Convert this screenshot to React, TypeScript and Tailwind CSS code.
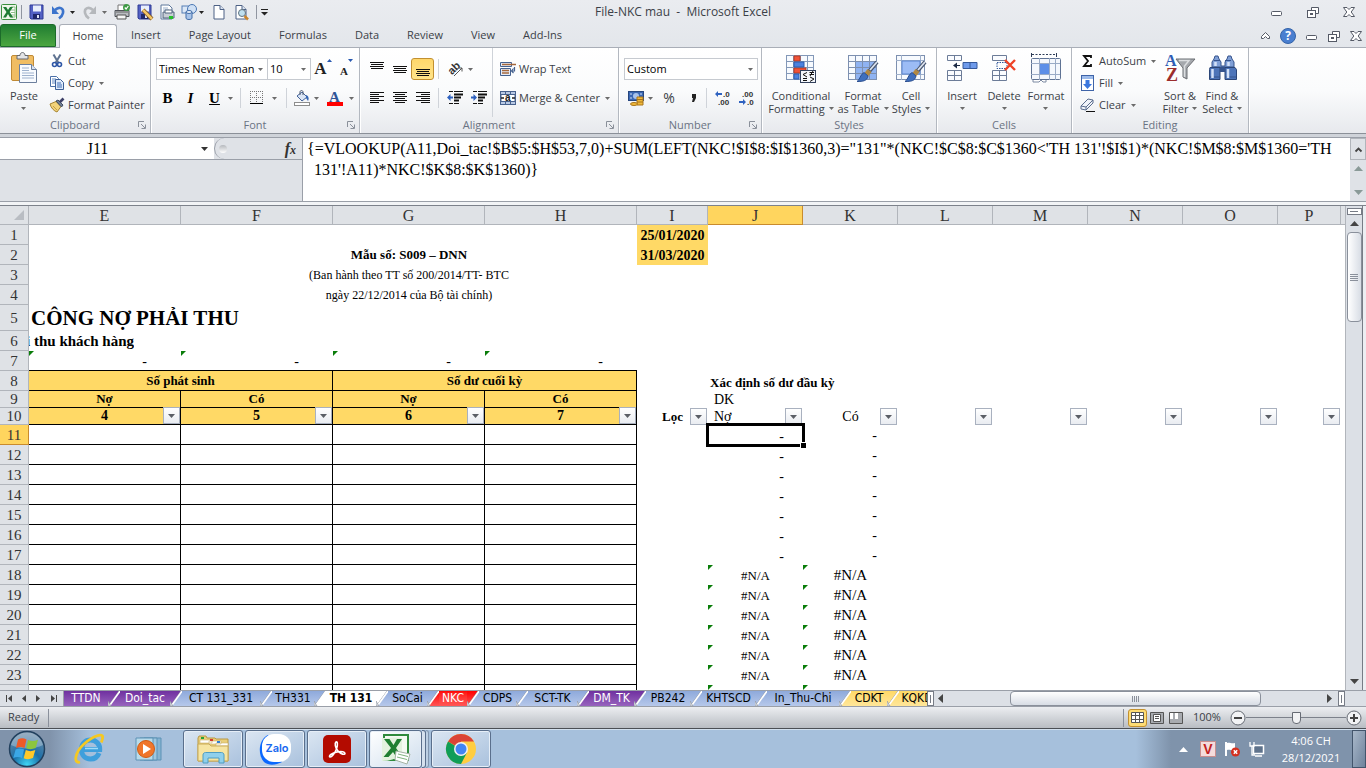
import { ReactNode } from 'react';

type IconProps = { w?: number; h?: number; children: ReactNode };

function Icon({ w = 16, h = 16, children }: IconProps) {
    return (
        <svg width={w} height={h} viewBox={`0 0 ${w} ${h}`} className="shrink-0 overflow-visible" fill="none" aria-hidden="true">
            {children}
        </svg>
    );
}

function Caret({ dark = false }: { dark?: boolean }) {
    return (
        <svg width="5" height="3" viewBox="0 0 5 3" className="shrink-0" aria-hidden="true">
            <path d="M0 0h5L2.500 3z" fill={dark ? '#222' : '#6b6b6b'} />
        </svg>
    );
}

/* ---------- icons ---------- */

const ExcelIcon = () => (
    <Icon w={16} h={16}>
        <rect x="0.5" y="0.5" width="15" height="15" rx="1" fill="#eef6ea" stroke="#3b8f3f" />
        <path d="M10 3h4v10h-4" stroke="#8fbf8a" fill="#fff" />
        <path d="M10 6h4M10 8.500h4M10 11h4" stroke="#8fbf8a" />
        <path d="M2 3h3.200l1.800 3 2-3h3L8.600 8l3.600 5.500H9L7 10l-2 3.500H2L5.500 8z" fill="#1e7b34" />
    </Icon>
);

const SaveIcon = ({ pencil = false }: { pencil?: boolean }) => (
    <Icon>
        <path d="M1 1h13v14H2l-1-1z" fill="#5361c4" stroke="#2f3a94" />
        <rect x="4" y="1.500" width="8" height="6" fill="#e8eefb" />
        <rect x="4" y="10" width="7" height="5" fill="#20286b" />
        <rect x="8" y="11" width="2" height="3" fill="#dfe5f7" />
        {pencil && <path d="M6 6l9 9" stroke="#7a4e1d" strokeWidth="4" />}
        {pencil && <path d="M6 6l9 9" stroke="#f3c667" strokeWidth="2.500" />}
    </Icon>
);

const UndoIcon = ({ redo = false }: { redo?: boolean }) => (
    <Icon>
        <g transform={redo ? 'translate(16 0) scale(-1 1)' : undefined}>
            <path d="M4 6c4-4 9-2 8 3-.5 2.500-2 4-4 5.500" stroke={redo ? '#b5b8bc' : '#3c74cc'} strokeWidth="2.600" />
            <path d="M1 2v8h7z" fill={redo ? '#b5b8bc' : '#3c74cc'} />
        </g>
    </Icon>
);

const PrintIcon = () => (
    <Icon>
        <path d="M4 1h8v6H4z" fill="#fff" stroke="#777" />
        <path d="M1 6.500h14v6H1z" fill="#b9bcc1" stroke="#4e5258" />
        <path d="M3 11h9v4H3z" fill="#f5f5f5" stroke="#555" />
        <path d="M2 8h12" stroke="#666" />
        <circle cx="12.500" cy="3.500" r="3.500" fill="#3f9a46" />
        <path d="M10.800 3.500l1.300 1.500 2.200-3" stroke="#fff" strokeWidth="1.200" />
    </Icon>
);

const QuickPrintIcon = () => (
    <Icon>
        <path d="M2 1h8l3 3v11H2z" fill="#fff" stroke="#5f789c" />
        <path d="M4 4h5M4 6h6" stroke="#9ab0cc" />
        <path d="M4 8h11v6H4z" fill="#c8ced6" stroke="#51657f" />
        <path d="M6 6h7v3H6z" fill="#fff" stroke="#51657f" />
        <rect x="10" y="12" width="4" height="3" fill="#27c02c" />
    </Icon>
);

const ShapesIcon = () => (
    <Icon>
        <rect x="1" y="2" width="8" height="7" fill="#dce8f7" stroke="#567fb5" />
        <circle cx="11" cy="5" r="4.500" fill="#cfe0f5" stroke="#4a77b4" />
        <path d="M5 8v6c0 2 6 2 6 0V8z" fill="#a8c4ea" stroke="#416ca8" />
        <ellipse cx="8" cy="8" rx="3" ry="1.500" fill="#e6effa" stroke="#416ca8" />
    </Icon>
);

const PageIcon = ({ lens = false }: { lens?: boolean }) => (
    <Icon w={14}>
        <path d="M2 1.500h6l4 4v9.500H2z" fill="#fff" stroke="#4d6185" />
        <path d="M8 1.500v4h4" stroke="#4d6185" fill="#dbe4f2" />
        {lens && <circle cx="8" cy="9" r="3.500" fill="#bfe0ef" stroke="#61717f" />}
        {lens && <path d="M10.500 12l3.500 3.500" stroke="#c9842b" strokeWidth="2.500" />}
    </Icon>
);

const PasteIcon = () => (
    <Icon w={28} h={32}>
        <rect x="1.500" y="3.500" width="22" height="25" rx="1.500" fill="#f0bd63" stroke="#c08a35" />
        <path d="M7 3.500h3c0-4 5-4 5 0h3V7H7z" fill="#e3e4e6" stroke="#67696e" />
        <path d="M9.500 12.500h12l5 5v13h-17z" fill="#f8fbff" stroke="#6c7f9d" />
        <path d="M21.500 12.500v5h5" fill="#d7e2f2" stroke="#6c7f9d" />
        <path d="M12 16h7M12 18.500h7M12 21h12M12 23.500h12M12 26h12" stroke="#9fb2ce" />
    </Icon>
);

const CutIcon = () => (
    <Icon>
        <path d="M4.500 1.500L9.500 10M11.500 1.500L6.500 10" stroke="#5f7391" strokeWidth="2" />
        <circle cx="5.500" cy="11.500" r="2" stroke="#2d56a6" strokeWidth="1.600" />
        <circle cx="10.500" cy="11.500" r="2" stroke="#2d56a6" strokeWidth="1.600" />
    </Icon>
);

const CopyIcon = () => (
    <Icon>
        <path d="M1.500 1.500h6l2 2v8h-8z" fill="#fff" stroke="#4a6fa8" />
        <path d="M3 4h4M3 6h4M3 8h3" stroke="#5f86c2" />
        <path d="M6.500 4.500h5l3 3v7h-8z" fill="#dfeafa" stroke="#3b5f98" />
        <path d="M8 8h4M8 10h5M8 12h5" stroke="#3f6cb4" />
    </Icon>
);

const PainterIcon = () => (
    <Icon>
        <path d="M1 7l6-2.500 5 5L8 15C5 14 2 11 1 7z" fill="#f2d37a" stroke="#a68432" />
        <path d="M4 9l4 4" stroke="#c6a146" />
        <path d="M7 4l2-1 5 5-1.500 2z" fill="#6f7f96" stroke="#414d60" />
        <path d="M11 5l3.500-3.500" stroke="#3c3f66" strokeWidth="2.600" />
    </Icon>
);

const GrowFontIcon = ({ shrink = false }: { shrink?: boolean }) => (
    <span className="flex items-start font-['Liberation_Serif',serif] font-bold text-[#222]">
        <span className={shrink ? 'pt-1 text-[11px] leading-4' : 'text-[17px] leading-5'}>A</span>
        <svg width="5" height="3" viewBox="0 0 5 3" aria-hidden="true">
            <path d={shrink ? 'M0 0h5L2.500 3z' : 'M0 3h5L2.500 0z'} fill="#2858b0" />
        </svg>
    </span>
);

const BordersIcon = () => (
    <Icon w={14} h={14}>
        <path d="M.5 0v12M6.500 0v12M12.500 0v12M0 .5h13M0 6.500h13" stroke="#777" strokeDasharray="1 1" />
        <path d="M0 12.500h13" stroke="#000" />
    </Icon>
);

const FillColorIcon = () => (
    <Icon>
        <path d="M3 6l5-4 5 5-5 4z" fill="#dbe6f6" stroke="#44639a" />
        <path d="M6 5V2c0-2 3-2 3 0v3" stroke="#4d5a70" />
        <path d="M12 5c3 1 3 4 2 6l-2-3z" fill="#3465b4" />
        <rect x=".5" y="12.500" width="15" height="3" fill="#fff" stroke="#8d8d8d" />
    </Icon>
);

const AlignIcon = ({ rows }: { rows: number[][] }) => (
    <Icon w={14} h={14}>
        {rows.map(([x, y, w]) => (
            <rect key={y} x={x} y={y} width={w} height="1" fill="#111" />
        ))}
    </Icon>
);

const TOP = [[0, 0, 14], [1, 2, 12], [0, 4, 14], [1, 6, 12]];
const MIDDLE = [[0, 4, 14], [1, 6, 12], [0, 8, 14], [1, 10, 12]];
const BOTTOM = [[0, 7, 14], [1, 9, 12], [0, 11, 14], [1, 13, 12]];
const LEFT = [[0, 1, 14], [0, 3, 9], [0, 5, 14], [0, 7, 9], [0, 9, 14], [0, 11, 9]];
const CENTER = [[0, 1, 14], [2, 3, 10], [0, 5, 14], [2, 7, 10], [0, 9, 14], [2, 11, 10]];
const RIGHT = [[0, 1, 14], [5, 3, 9], [0, 5, 14], [5, 7, 9], [0, 9, 14], [5, 11, 9]];

const IndentIcon = ({ out = false }: { out?: boolean }) => (
    <Icon>
        <path d="M2 1.500h4M7 1.500h9M2 13.500h4M7 13.500h5" stroke="#111" />
        <path d="M7 4.500h9M7 10.500h5" stroke="#111" strokeWidth="2" />
        <path d="M7 7.500h7" stroke="#111" strokeWidth="2" />
        <path d={out ? 'M0 7.500L3.500 4v2.500H6v2H3.500V11z' : 'M6 7.500L2.500 4v2.500H0v2h2.500V11z'} fill="#2f62c0" />
    </Icon>
);

const OrientIcon = () => (
    <Icon>
        <text x="0" y="11" transform="rotate(-45 6 8)" fontSize="11" fontWeight="bold" fontFamily="Liberation Sans, sans-serif" fill="#333">ab</text>
        <path d="M6 15l8-8M10.500 7H14v3.500" stroke="#555" />
    </Icon>
);

const WrapIcon = () => (
    <Icon>
        <path d="M.5 1.500h11v4H.5zM.5 7.500h10v7H.5z" fill="#e4ecf8" stroke="#44618f" />
        <path d="M2 3.500h14M2 9.500h7M2 12h7" stroke="#a6683c" strokeWidth="1.300" />
        <path d="M14.500 6v4H12M13.500 7.500L11.500 10l2 2" stroke="#44618f" strokeWidth="1.200" />
    </Icon>
);

const MergeIcon = () => (
    <Icon>
        <rect x=".5" y="1.500" width="15" height="13" fill="#b8c9e4" stroke="#48628d" />
        <path d="M5.500 2v3M10.500 2v3M5.500 11v3M10.500 11v3" stroke="#48628d" />
        <rect x="1" y="4.500" width="14" height="7" fill="#fff" stroke="#48628d" />
        <text x="5" y="11" fontSize="10" fontWeight="bold" fontFamily="Liberation Sans, sans-serif" fill="#222">a</text>
        <path d="M1 8h3M12 8h3" stroke="#222" strokeWidth="1.500" />
    </Icon>
);

const CurrencyIcon = () => (
    <Icon>
        <rect x=".5" y="1.500" width="15" height="9" fill="#3b68b4" stroke="#27477f" />
        <ellipse cx="8" cy="6" rx="3" ry="3" fill="#a8c2ea" />
        <path d="M2 4h2M12 4h2M2 8h2" stroke="#cfdef5" />
        <path d="M9 7h6v8H9z" fill="#f0b93a" stroke="#a9741a" />
        <path d="M9 9.500h6M9 12h6" stroke="#a9741a" />
        <ellipse cx="6" cy="14" rx="3.500" ry="1.500" fill="#f0b93a" stroke="#a9741a" />
    </Icon>
);

const DecimalIcon = ({ less = false }: { less?: boolean }) => (
    <Icon>
        <text x={less ? 3 : 8} y="7" fontSize="8" fontWeight="bold" fontFamily="Liberation Sans, sans-serif" fill="#333">{less ? '.00' : '.0'}</text>
        <text x={less ? 8 : 3} y="15" fontSize="8" fontWeight="bold" fontFamily="Liberation Sans, sans-serif" fill="#333">{less ? '.0' : '.00'}</text>
        {less ? (
            <path d="M7 12L4 9v2H0v2h4v2z" fill="#2f62c0" />
        ) : (
            <path d="M0 4l3-3v2h4v2H3v2z" fill="#2f62c0" />
        )}
    </Icon>
);

const Brush = () => (
    <g>
        <path d="M30 10L22 19.500" stroke="#46546e" strokeWidth="4" />
        <path d="M30 10L23 18" stroke="#dce3ee" strokeWidth="1.800" />
        <path d="M22.500 18.500l-3 4" stroke="#b08843" strokeWidth="5" />
        <path d="M17 20.500l4 3.500c-1 5-5 5.500-11 5.500 3-1.500 3-7 7-9z" fill="#3f6fbd" stroke="#2b4f90" />
    </g>
);

const ConditionalIcon = () => (
    <Icon w={32} h={32}>
        <rect x="1.500" y="3.500" width="27" height="24" fill="#f7fafe" stroke="#8398b8" />
        <path d="M8.500 3v25M15.500 3v25M22.500 3v25M1 9.500h28M1 15.500h28M1 21.500h28" stroke="#8398b8" />
        <path d="M9 4h6v5H9zM9 16h12v5H9z" fill="#f05237" stroke="#b83a25" />
        <path d="M9 10h10v5H9zM9 22h5v5H9z" fill="#4c82e0" stroke="#2d5cae" />
        <rect x="15.500" y="18.500" width="15" height="12" fill="#f4f7fc" stroke="#33415c" />
        <path d="M22 20.500l-4 2 4 2.500M18 26.500h4M18 28.500h4M24.500 20.500h4.500M24.500 22.500h4.500M28 19l-3 5M25 25l4 2-4 2.500" stroke="#111" />
    </Icon>
);

const FormatTableIcon = () => (
    <Icon w={32} h={32}>
        <rect x="1.500" y="3.500" width="28" height="24" fill="#f7fafe" stroke="#7d90b0" />
        <rect x="9" y="10" width="20" height="17" fill="#8fb3f2" />
        <path d="M8.500 3v25M15.500 3v25M22.500 3v25M1 9.500h28M1 15.500h28M1 21.500h28" stroke="#7d90b0" />
        <Brush />
    </Icon>
);

const CellStylesIcon = () => (
    <Icon w={32} h={32}>
        <rect x="1.500" y="3.500" width="28" height="24" fill="#f7fafe" stroke="#7d90b0" />
        <path d="M6.500 3v25M25.500 3v25M1 8.500h28M1 22.500h28" stroke="#9fb0ca" />
        <rect x="7" y="9" width="18" height="13" fill="#9cbcf5" stroke="#5c86cf" />
        <Brush />
    </Icon>
);

const InsertIcon = () => (
    <Icon w={32} h={32}>
        <path d="M1.500 3.500h14v5h-14zM8.500 3v6M1.500 18.500h14v10h-14zM8.500 18v10M1 23.500h15" fill="#fafcff" stroke="#6c7c98" />
        <path d="M17 10.500h14v6H17z" fill="#6e9aea" stroke="#34589a" />
        <path d="M24 10v7" stroke="#34589a" />
        <path d="M7 13.500l4-3v2.500h3v1h-3v2.500z" fill="#1d2b45" />
    </Icon>
);

const DeleteIcon = () => (
    <Icon w={32} h={32}>
        <path d="M4.500 3.500h14v5h-14zM4.500 18.500h14v10h-14zM11.500 18v10M4 23.500h15" fill="#fafcff" stroke="#6c7c98" />
        <path d="M9 10.500h10v6H9z" stroke="#33589a" strokeDasharray="1.500 1" />
        <path d="M17 8l10 10M27 8L17 18" stroke="#ee4327" strokeWidth="2.400" />
    </Icon>
);

const FormatIcon = () => (
    <Icon w={32} h={32}>
        <path d="M1.500 1v4M26.500 1v4" stroke="#2d3c56" />
        <path d="M2 2.500h24" stroke="#2d3c56" strokeDasharray="2 1.500" />
        <path d="M3 27v3h6l2-2 2 2h3v-3" fill="#fff" stroke="#7d8aa2" />
        <rect x="1.500" y="6.500" width="29" height="21" rx="1" fill="#f5f8fd" stroke="#5f7394" />
        <path d="M9.500 6v22M19.500 6v22M25.500 6v22M1 11.500h29M1 22.500h29" stroke="#9aabc6" />
        <rect x="10" y="12" width="9" height="10" fill="#5d8fe8" />
    </Icon>
);

const FillIcon = () => (
    <Icon>
        <rect x="1.500" y=".5" width="12" height="15" fill="#fff" stroke="#3f64a8" />
        <rect x="2" y="1" width="11" height="3" fill="#9dbbea" />
        <path d="M5.500 5h4v4H12l-4.500 5L3 9h2.500z" fill="#3a76de" />
    </Icon>
);

const ClearIcon = () => (
    <Icon>
        <path d="M1 9l7-7 5 1v3l-7 7-5-1z" fill="#f0f3f9" stroke="#5a6d8e" />
        <path d="M1 9l5 1 7-7M6 10v3" stroke="#5a6d8e" />
        <path d="M6 14.500h9" stroke="#111" />
    </Icon>
);

const SortIcon = () => (
    <Icon w={32} h={32}>
        <path d="M12 7h19l-8 9v11l-4-2v-9z" fill="#a5a8ad" stroke="#6b6e73" />
        <path d="M15 8.500h10L20.500 14v11" stroke="#dcdee1" strokeWidth="1.500" />
        <text x="1" y="14" fontSize="16" fontWeight="bold" fontFamily="Liberation Serif, serif" fill="#2f5db5">A</text>
        <text x="2" y="29" fontSize="18" fontWeight="bold" fontFamily="Liberation Serif, serif" fill="#9b2d2d">Z</text>
    </Icon>
);

const FindIcon = () => (
    <Icon w={32} h={32}>
        <path d="M8 7l1-3h3l1 3 2 3v4h4v-4l2-3 1-3h3l1 3 2 3v5H6v-5z" fill="#7f9fd6" stroke="#36548d" />
        <path d="M4 15.500h10v12H3.500v-10zM19 15.500h10l1.500 2v10H19z" fill="#4d74b8" stroke="#2b4577" />
        <path d="M14 15h5v5h-5z" fill="#36548d" />
        <path d="M8 8.500h6M19 8.500h6M4 25h10M19 25h11" stroke="#36548d" />
        <path d="M6.500 17v9M22 17v9M9.500 10v4M22.500 10v4" stroke="#d3e1f8" strokeWidth="2.500" />
    </Icon>
);

const MinIcon = () => (
    <Icon w={12} h={12}><rect x=".5" y="5.500" width="10" height="4" rx="1" fill="#fff" stroke="#555a66" /></Icon>
);
const RestoreIcon = () => (
    <Icon w={12} h={12}>
        <path d="M4.500 1.500h7v6h-3v-3h-4z" fill="#fff" stroke="#555a66" />
        <rect x=".5" y="4.500" width="8" height="7" fill="#fff" stroke="#555a66" />
        <rect x="3.500" y="7.500" width="2" height="1" stroke="#555a66" />
    </Icon>
);
const CloseIcon = () => (
    <Icon w={12} h={12}>
        <path d="M.5 1.500h3.500l2 2 2-2h3.500L8.200 6l3.300 4.500H8l-2-2-2 2H.5L3.800 6z" fill="#fff" stroke="#555a66" />
    </Icon>
);

/* ---------- ribbon parts ---------- */

function Group({ label, launcher = false, className = '', children }: { label: string; launcher?: boolean; className?: string; children: ReactNode }) {
    return (
        <section className={`flex shrink-0 flex-col border-r border-[#b3b8c0] shadow-[1px_0_0_#fff] ${className}`} aria-label={label}>
            <div className="flex h-[69px] pl-1">{children}</div>
            <div className="relative h-4 text-center leading-4 text-[#6a7383]">
                {label}
                {launcher && (
                    <button type="button" className="absolute right-1 top-1" aria-label={`${label} settings`}>
                        <Icon w={8} h={8}>
                            <path d="M.5 6V.5H6M3 3l4 4M7.500 3.500v4h-4" stroke="#8a909a" />
                        </Icon>
                    </button>
                )}
            </div>
        </section>
    );
}

function LargeButton({ icon, lines, caretBelow = false, className = '' }: { icon: ReactNode; lines: string[]; caretBelow?: boolean; className?: string }) {
    return (
        <button type="button" className={`flex flex-col items-center gap-[5px] whitespace-nowrap pt-1 leading-[13px] ${className}`}>
            {icon}
            <span className="flex flex-col items-center">
                <span>{lines[0]}</span>
                <span className="flex h-[13px] items-center gap-1">
                    {!caretBelow && lines[1]}
                    <Caret />
                </span>
            </span>
        </button>
    );
}

function SmallButton({ icon, label, caret = false }: { icon: ReactNode; label: string; caret?: boolean }) {
    return (
        <button type="button" className="flex h-[22px] items-center gap-[3px] whitespace-nowrap">
            {icon}
            <span>{label}</span>
            {caret && <span className="pl-0.5"><Caret /></span>}
        </button>
    );
}

function Combo({ label, value, className }: { label: string; value: string; className: string }) {
    return (
        <label className={`flex h-[22px] items-center border border-[#c6cad0] bg-white pr-1 ${className}`}>
            <select aria-label={label} defaultValue={value} className="min-w-0 flex-1 appearance-none bg-transparent pl-[2px] text-black outline-none">
                <option>{value}</option>
            </select>
            <Caret />
        </label>
    );
}

const Tool = ({ label, children, className = 'w-[23px]' }: { label: string; children: ReactNode; className?: string }) => (
    <button type="button" aria-label={label} className={`flex h-[22px] items-center justify-center ${className}`}>
        {children}
    </button>
);

const Sep = () => <span className="h-5 w-px shrink-0 bg-[#cfd3d9]" />;

/* ---------- sheet data ---------- */

const columns = [
    { id: 'E', width: 'w-[152px]' },
    { id: 'F', width: 'w-[152px]' },
    { id: 'G', width: 'w-[152px]' },
    { id: 'H', width: 'w-[152px]' },
    { id: 'I', width: 'w-[71px]' },
    { id: 'J', width: 'w-[95px]' },
    { id: 'K', width: 'w-[95px]' },
    { id: 'L', width: 'w-[95px]' },
    { id: 'M', width: 'w-[95px]' },
    { id: 'N', width: 'w-[95px]' },
    { id: 'O', width: 'w-[95px]' },
    { id: 'P', width: 'w-[63px]' },
];

const bodyRows = [11, 12, 13, 14, 15, 16, 17, 18, 19, 20, 21, 22, 23, 24];

const sheetTabs = [
    { name: 'TTDN', width: 'w-11', tone: 'purple' },
    { name: 'Doi_tac', width: 'w-[50px]', tone: 'purple' },
    { name: 'CT 131_331', width: 'w-[78px]', tone: 'blue' },
    { name: 'TH331', width: 'w-[42px]', tone: 'blue' },
    { name: 'TH 131', width: 'w-[50px]', tone: 'active' },
    { name: 'SoCai', width: 'w-[39px]', tone: 'blue' },
    { name: 'NKC', width: 'w-7', tone: 'red' },
    { name: 'CDPS', width: 'w-[37px]', tone: 'blue' },
    { name: 'SCT-TK', width: 'w-[49px]', tone: 'blue' },
    { name: 'DM_TK', width: 'w-[45px]', tone: 'purple' },
    { name: 'PB242', width: 'w-11', tone: 'blue' },
    { name: 'KHTSCD', width: 'w-[53px]', tone: 'blue' },
    { name: 'In_Thu-Chi', width: 'w-[72px]', tone: 'blue' },
    { name: 'CDKT', width: 'w-9', tone: 'gold' },
    { name: 'KQKD', width: 'w-9', tone: 'gold' },
];

const toneClass: Record<string, string> = {
    purple: 'bg-gradient-to-b from-[#7030a0] to-[#9763bd] text-white',
    blue: 'bg-gradient-to-b from-[#8ea9db] to-[#b6c8ea] text-black',
    red: 'bg-gradient-to-b from-[#ff0000] to-[#ff5555] text-white',
    gold: 'bg-gradient-to-b from-[#ffd966] to-[#ffe699] text-black',
    active: 'bg-white text-black font-bold',
};

const toneFill: Record<string, string[]> = {
    purple: ['#7030a0', '#9763bd'],
    blue: ['#8ea9db', '#b6c8ea'],
    red: ['#ff0000', '#ff5555'],
    gold: ['#ffd966', '#ffe699'],
    active: ['#ffffff', '#ffffff'],
};

const formula =
    "{=VLOOKUP(A11,Doi_tac!$B$5:$H$53,7,0)+SUM(LEFT(NKC!$I$8:$I$1360,3)=\"131\"*(NKC!$C$8:$C$1360<'TH 131'!$I$1)*(NKC!$M$8:$M$1360='TH 131'!A11)*NKC!$K$8:$K$1360)}";

// cells inside the bordered table keep their right border clear, the others stop a pixel short of the gridline
const Filter = ({ inset = false }: { inset?: boolean }) => (
    <button type="button" aria-label="Filter" className={`absolute bottom-0 flex size-[17px] items-center justify-center border border-[#a9b1bf] bg-gradient-to-b from-white to-[#e9ecf1] ${inset ? 'right-px' : 'right-0'}`}>
        <svg width="7" height="4" viewBox="0 0 7 4" aria-hidden="true"><path d="M0 0h7L3.500 4z" fill="#5b5f66" /></svg>
    </button>
);

const ErrorMark = () => (
    <svg width="5" height="5" viewBox="0 0 5 5" className="absolute left-0 top-0" aria-hidden="true"><path d="M0 0h5L0 5z" fill="#0a7d0a" /></svg>
);

function RowHead({ n, active = false }: { n: number; active?: boolean }) {
    return (
        <th scope="row" className={`border-b border-r text-center text-[15px] font-normal leading-4 ${active ? 'border-[#c98b2d] bg-[#ffd55e] text-[#333]' : 'border-[#b1b5bb] bg-[#dfe2e6] text-[#333]'}`}>
            {n}
        </th>
    );
}

const Blank = ({ count }: { count: number }) => <td colSpan={count} />;

function Sheet() {
    return (
        <table className="w-full table-fixed border-separate border-spacing-0 font-['Liberation_Serif',serif] text-[13px] leading-4 text-black [&_td]:p-0 [&_th]:p-0">
            <colgroup>
                <col className="w-[29px]" />
                {columns.map((c) => <col key={c.id} className={c.width} />)}
                <col />
            </colgroup>
            <thead>
                <tr className="h-[19px] bg-[#dfe2e6] text-base leading-4 text-[#333]">
                    <td className="border-b border-r border-[#b1b5bb]">
                        <svg width="10" height="10" viewBox="0 0 10 10" className="ml-auto mr-1" aria-hidden="true"><path d="M10 0v10H0z" fill="#b9bdc3" /></svg>
                    </td>
                    {columns.map((c) => (
                        <th key={c.id} scope="col" className={`border-b border-r pt-px! font-normal ${c.id === 'J' ? 'border-[#c98b2d] bg-[#ffd55e]' : 'border-[#b1b5bb]'}`}>
                            {c.id}
                        </th>
                    ))}
                    <td className="border-b border-[#b1b5bb]" />
                </tr>
            </thead>
            <tbody>
                <tr className="h-5">
                    <RowHead n={1} />
                    <Blank count={4} />
                    <td className="bg-[#ffd966] pt-0.5! text-center text-sm font-bold leading-4">25/01/2020</td>
                    <Blank count={8} />
                </tr>
                <tr className="h-5">
                    <RowHead n={2} />
                    <Blank count={2} />
                    <td className="text-center text-[13px] font-bold">Mẫu số: S009 – DNN</td>
                    <td />
                    <td className="bg-[#ffd966] pt-0.5! text-center text-sm font-bold leading-4">31/03/2020</td>
                    <Blank count={8} />
                </tr>
                <tr className="h-5">
                    <RowHead n={3} />
                    <Blank count={2} />
                    <td><div className="flex justify-center whitespace-nowrap text-xs leading-4">(Ban hành theo TT số 200/2014/TT- BTC</div></td>
                    <Blank count={10} />
                </tr>
                <tr className="h-5">
                    <RowHead n={4} />
                    <Blank count={2} />
                    <td><div className="flex justify-center whitespace-nowrap text-xs leading-4">ngày 22/12/2014 của Bộ tài chính)</div></td>
                    <Blank count={10} />
                </tr>
                <tr className="h-[26px]">
                    <RowHead n={5} />
                    <td colSpan={2} className="pl-[2px]! text-[21px] font-bold leading-6">CÔNG NỢ PHẢI THU</td>
                    <Blank count={11} />
                </tr>
                <tr className="h-5">
                    <RowHead n={6} />
                    <td colSpan={2}><div className="flex w-[105px] justify-end overflow-hidden whitespace-nowrap text-[15px] font-bold leading-[19px]">i thu khách hàng</div></td>
                    <Blank count={11} />
                </tr>
                <tr className="h-5">
                    <RowHead n={7} />
                    {['E', 'F', 'G', 'H'].map((c) => (
                        <td key={c} className="relative border-b border-black pr-[34px]! pt-0.5! text-right text-sm leading-4"><ErrorMark />-</td>
                    ))}
                    <Blank count={9} />
                </tr>
                <tr className="h-5">
                    <RowHead n={8} />
                    <td colSpan={2} className="border-b border-r border-black bg-[#ffd966] text-center font-bold">Số phát sinh</td>
                    <td colSpan={2} className="border-b border-r border-black bg-[#ffd966] text-center font-bold">Số dư cuối kỳ</td>
                    <td />
                    <td colSpan={2} className="pl-[2px]! align-bottom font-bold">Xác định số dư đầu kỳ</td>
                    <Blank count={6} />
                </tr>
                <tr className="h-[17px]">
                    <RowHead n={9} />
                    {['Nợ', 'Có', 'Nợ', 'Có'].map((t, i) => (
                        <td key={i} className="border-b border-r border-black bg-[#ffd966] text-center font-bold">{t}</td>
                    ))}
                    <td />
                    <td className="pl-1.5! text-sm leading-4">DK</td>
                    <Blank count={7} />
                </tr>
                <tr className="h-[17px]">
                    <RowHead n={10} />
                    {['4', '5', '6', '7'].map((t) => (
                        <td key={t} className="relative border-b border-r border-black bg-[#ffd966] text-center text-sm font-bold leading-4">{t}<Filter /></td>
                    ))}
                    <td className="relative text-center font-bold">Lọc<Filter inset /></td>
                    <td className="relative pl-1.5! text-sm leading-4">Nợ<Filter inset /></td>
                    <td className="relative text-center text-sm leading-4">Có<Filter inset /></td>
                    {['L', 'M', 'N', 'O', 'P'].map((c) => <td key={c} className="relative"><Filter inset /></td>)}
                    <td />
                </tr>
                {bodyRows.map((n) => {
                    const missing = n >= 18;
                    return (
                        <tr key={n} className="h-5">
                            <RowHead n={n} active={n === 11} />
                            {['E', 'F', 'G', 'H'].map((c) => <td key={c} className="border-b border-r border-black" />)}
                            <td />
                            <td className={missing ? 'relative pt-px! text-center' : 'relative pr-[19px]! pt-[3px]! text-right text-sm leading-4'}>
                                {missing ? <><ErrorMark />#N/A</> : '-'}
                                {n === 11 && (
                                    <span className="absolute -inset-x-0.5 -inset-y-0.5 border-[3px] border-black">
                                        <span className="absolute -bottom-1 -right-1 size-[6px] border-l border-t border-white bg-black" />
                                    </span>
                                )}
                            </td>
                            <td className={missing ? 'relative text-center text-[15px] leading-4' : 'pr-[21px]! pt-0.5! text-right text-sm leading-4'}>
                                {missing ? <><ErrorMark />#N/A</> : '-'}
                            </td>
                            <Blank count={6} />
                        </tr>
                    );
                })}
            </tbody>
        </table>
    );
}

/* ---------- window sections ---------- */

function TitleBar() {
    return (
        <header className="grid h-6 shrink-0 grid-cols-[1fr_auto_1fr] items-center text-[#3b3f47]">
            <div className="flex items-center pl-px">
                <ExcelIcon />
                <span className="ml-1 mr-[7px] h-3.5 w-px bg-[#9095a0]" />
                <button type="button" aria-label="Save"><SaveIcon /></button>
                <button type="button" aria-label="Undo" className="ml-1.5 flex items-center gap-[3px]"><UndoIcon /><Caret dark /></button>
                <button type="button" aria-label="Redo" className="ml-1.5 flex items-center gap-[5px]"><UndoIcon redo /><Caret /></button>
                <button type="button" aria-label="Print" className="ml-[7px]"><PrintIcon /></button>
                <button type="button" aria-label="Save as" className="ml-[7px]"><SaveIcon pencil /></button>
                <button type="button" aria-label="Quick print" className="ml-1.5"><QuickPrintIcon /></button>
                <button type="button" aria-label="Shapes" className="ml-1.5 flex items-center gap-0.5"><ShapesIcon /><Caret dark /></button>
                <button type="button" aria-label="New" className="ml-2"><PageIcon /></button>
                <button type="button" aria-label="Print preview" className="ml-2"><PageIcon lens /></button>
                <span className="ml-2 mr-1 h-3.5 w-px bg-[#9095a0]" />
                <button type="button" aria-label="Customize toolbar">
                    <Icon w={7} h={8}><path d="M0 1.500h7" stroke="#222" /><path d="M0 4h7L3.500 7.500z" fill="#222" /></Icon>
                </button>
            </div>
            <h1 className="whitespace-pre text-xs">File-NKC mau  -  Microsoft Excel</h1>
            <div className="flex items-center justify-end gap-6 pr-[11px]">
                <button type="button" aria-label="Minimize"><MinIcon /></button>
                <button type="button" aria-label="Restore"><RestoreIcon /></button>
                <button type="button" aria-label="Close"><CloseIcon /></button>
            </div>
        </header>
    );
}

function RibbonTabs() {
    return (
        <nav className="flex h-6 shrink-0 items-end border-b border-[#a9aeb7] text-[#3b3f47]">
            <button type="button" className="h-[23px] w-14 rounded-t-[3px] border border-[#1c6b2a] bg-gradient-to-b from-[#1f7d32] to-[#4ba640] text-white">File</button>
            <button type="button" className="-mb-px ml-[3px] h-6 w-[58px] rounded-t-[3px] border border-b-0 border-[#a9aeb7] bg-white">Home</button>
            {['Insert', 'Page Layout', 'Formulas', 'Data', 'Review', 'View', 'Add-Ins'].map((t) => (
                <button key={t} type="button" className="h-[23px] px-3.5">{t}</button>
            ))}
            <div className="ml-auto flex h-[23px] items-center gap-2.5 pr-1">
                <button type="button" aria-label="Collapse ribbon">
                    <Icon w={9} h={8}><path d="M.5 4.500l4-4 4 4v2h-2l-2-2-2 2h-2z" fill="#fff" stroke="#555a66" /></Icon>
                </button>
                <button type="button" aria-label="Help" className="flex size-4 items-center justify-center rounded-full border border-[#3463a8] bg-[#4a7fd0] text-xs font-bold leading-none text-white">?</button>
                <button type="button" aria-label="Minimize workbook"><MinIcon /></button>
                <button type="button" aria-label="Restore workbook"><RestoreIcon /></button>
                <button type="button" aria-label="Close workbook"><CloseIcon /></button>
            </div>
        </nav>
    );
}

function Ribbon() {
    return (
        <div className="flex h-[86px] shrink-0 overflow-hidden border-b border-[#8b9098] bg-gradient-to-b from-white via-[#fafbfc] to-[#e7e9ed] text-[#3b3f47]">
            <Group label="Clipboard" launcher className="w-[151px]">
                <LargeButton icon={<PasteIcon />} lines={['Paste']} caretBelow className="w-10" />
                <div className="flex flex-col pl-[5px] pt-0.5">
                    <SmallButton icon={<CutIcon />} label="Cut" />
                    <SmallButton icon={<CopyIcon />} label="Copy" caret />
                    <SmallButton icon={<PainterIcon />} label="Format Painter" />
                </div>
            </Group>

            <Group label="Font" launcher className="w-[209px]">
                <div className="flex flex-col gap-[7px] pl-px pt-2.5">
                    <div className="flex items-center">
                        <Combo label="Font name" value="Times New Roman" className="w-28" />
                        <Combo label="Font size" value="10" className="-ml-px w-[44px]" />
                        <Tool label="Grow font" className="w-6"><GrowFontIcon /></Tool>
                        <Tool label="Shrink font"><GrowFontIcon shrink /></Tool>
                    </div>
                    <div className="flex items-center font-['Liberation_Serif',serif] text-[15px] text-black">
                        <Tool label="Bold"><b>B</b></Tool>
                        <Tool label="Italic"><i className="font-bold">I</i></Tool>
                        <Tool label="Underline" className="w-[38px] gap-2"><b className="underline">U</b><Caret /></Tool>
                        <Sep />
                        <Tool label="Borders" className="w-[45px] gap-2"><BordersIcon /><Caret /></Tool>
                        <Sep />
                        <Tool label="Fill color" className="w-[39px] gap-1"><FillColorIcon /><Caret /></Tool>
                        <Tool label="Font color" className="w-7 gap-1.5">
                            <Icon>
                                <text x="2" y="12" fontSize="15" fontWeight="bold" fontFamily="Liberation Serif, serif" fill="#2f5597">A</text>
                                <rect x="0" y="12" width="16" height="4" fill="#f00" />
                            </Icon>
                            <Caret />
                        </Tool>
                    </div>
                </div>
            </Group>

            <Group label="Alignment" launcher className="w-[259px]">
                <div className="flex flex-col gap-[7px] pl-px pt-2.5">
                    <div className="flex items-center">
                        <Tool label="Top align"><AlignIcon rows={TOP} /></Tool>
                        <Tool label="Middle align"><AlignIcon rows={MIDDLE} /></Tool>
                        <Tool label="Bottom align" className="w-[23px] rounded-[3px] border border-[#c29030] bg-gradient-to-b from-[#ffd76b] to-[#ffe58a]"><AlignIcon rows={BOTTOM} /></Tool>
                        <span className="pl-1"><span className="block h-5 w-px bg-[#cfd3d9]" /></span>
                        <Tool label="Orientation" className="w-[42px] gap-1"><OrientIcon /><Caret /></Tool>
                    </div>
                    <div className="flex items-center">
                        <Tool label="Align left"><AlignIcon rows={LEFT} /></Tool>
                        <Tool label="Center"><AlignIcon rows={CENTER} /></Tool>
                        <Tool label="Align right"><AlignIcon rows={RIGHT} /></Tool>
                        <span className="pl-1"><span className="block h-5 w-px bg-[#cfd3d9]" /></span>
                        <Tool label="Decrease indent" className="w-8"><IndentIcon out /></Tool>
                        <Tool label="Increase indent" className="w-4"><IndentIcon /></Tool>
                    </div>
                </div>
                <div className="ml-auto mr-1 flex w-[122px] flex-col gap-[7px] border-l border-[#cfd3d9] pl-[7px] pt-2.5">
                    <SmallButton icon={<WrapIcon />} label="Wrap Text" />
                    <SmallButton icon={<MergeIcon />} label="Merge & Center" caret />
                </div>
            </Group>

            <Group label="Number" launcher className="w-[143px]">
                <div className="flex flex-col gap-[7px] pl-px pt-2.5">
                    <Combo label="Number format" value="Custom" className="w-[134px]" />
                    <div className="flex items-center">
                        <Tool label="Accounting format" className="w-8 gap-1"><CurrencyIcon /><Caret /></Tool>
                        <Tool label="Percent style" className="w-[26px] text-sm">%</Tool>
                        <Tool label="Comma style" className="w-6"><Icon w={6} h={10}><path d="M1 1h4v4L3 9H1l1-4H1z" fill="#222" /></Icon></Tool>
                        <Sep />
                        <Tool label="Increase decimal" className="w-8"><DecimalIcon /></Tool>
                        <Tool label="Decrease decimal" className="w-4"><DecimalIcon less /></Tool>
                    </div>
                </div>
            </Group>

            <Group label="Styles" className="w-[175px]">
                <LargeButton icon={<ConditionalIcon />} lines={['Conditional', 'Formatting']} className="w-[70px]" />
                <LargeButton icon={<FormatTableIcon />} lines={['Format', 'as Table']} className="w-[54px]" />
                <LargeButton icon={<CellStylesIcon />} lines={['Cell', 'Styles']} className="w-[42px]" />
            </Group>

            <Group label="Cells" className="w-[135px]">
                <LargeButton icon={<InsertIcon />} lines={['Insert']} caretBelow className="w-[42px]" />
                <LargeButton icon={<DeleteIcon />} lines={['Delete']} caretBelow className="w-[42px]" />
                <LargeButton icon={<FormatIcon />} lines={['Format']} caretBelow className="w-[42px]" />
            </Group>

            <Group label="Editing" className="w-[177px]">
                <div className="flex w-[83px] flex-col pl-1 pt-0.5">
                    <SmallButton icon={<Icon><path d="M11 5V3H4l4 5-4 5h7v-2" stroke="#111" strokeWidth="1.800" /></Icon>} label="AutoSum" caret />
                    <SmallButton icon={<FillIcon />} label="Fill" caret />
                    <SmallButton icon={<ClearIcon />} label="Clear" caret />
                </div>
                <LargeButton icon={<SortIcon />} lines={['Sort &', 'Filter']} className="w-[42px]" />
                <LargeButton icon={<FindIcon />} lines={['Find &', 'Select']} className="w-[42px]" />
            </Group>
        </div>
    );
}

function FormulaBar() {
    return (
        <div className="flex h-[65px] shrink-0 border-y border-[#9a9fa8] bg-[#dfe2e7] font-['Liberation_Serif',serif] text-black">
            <div className="flex w-[303px] shrink-0 flex-col border-r border-[#9a9fa8]">
                <div className="flex h-[22px] items-center border-b border-[#9a9fa8]">
                    <label className="flex h-full w-[214px] items-center bg-white pr-1.5">
                        <input aria-label="Name box" defaultValue="J11" className="min-w-0 flex-1 bg-transparent pr-1.5 text-center text-base leading-5 outline-none" />
                        <svg width="7" height="4" viewBox="0 0 7 4" aria-hidden="true"><path d="M0 0h7L3.500 4z" fill="#333" /></svg>
                    </label>
                    <div className="flex h-full flex-1 items-center justify-between rounded-l-full border-l border-[#9a9fa8] pl-1 pr-1.5">
                        <span className="size-2 rounded-full bg-gradient-to-b from-[#b5b8bd] to-white" />
                        <button type="button" aria-label="Insert function" className="text-base font-bold italic leading-5 text-[#333]">f<span className="text-xs">x</span></button>
                    </div>
                </div>
            </div>
            <textarea
                aria-label="Formula"
                defaultValue={formula}
                className="min-w-0 flex-1 resize-none overflow-hidden bg-white pl-[11px] pr-4 -indent-[7px] text-base leading-[21px] outline-none"
            />
            <div className="flex w-4 shrink-0 flex-col">
                <button type="button" aria-label="Collapse formula bar" className="flex h-[22px] items-center justify-center border border-[#b1b5bb]">
                    <Icon w={7} h={5}><path d="M.5 4.500l3-3 3 3" stroke="#444" strokeWidth="1.800" /></Icon>
                </button>
                <div className="flex flex-1 flex-col items-center justify-between py-1.5">
                    <Icon w={9} h={5}><path d="M0 5h9L4.500 0z" fill="#8a9a98" /></Icon>
                    <Icon w={9} h={5}><path d="M0 0h9L4.500 5z" fill="#8a9a98" /></Icon>
                </div>
            </div>
        </div>
    );
}

function VerticalScroll() {
    return (
        <div className="flex w-[21px] shrink-0 border-l border-[#b1b5bb] bg-[#dce0e6]">
            <div className="flex flex-1 flex-col items-center">
                <span className="mt-0.5 flex h-[7px] w-[15px] items-center justify-center border border-[#777c86] bg-white"><span className="h-px w-2 bg-[#777c86]" /></span>
                <button type="button" aria-label="Scroll up" className="flex h-[17px] items-center"><Icon w={9} h={5}><path d="M0 5h9L4.500 0z" fill="#444" /></Icon></button>
                <span className="flex h-[90px] w-[15px] flex-col items-center justify-center gap-px rounded-sm border border-[#8a909b] bg-gradient-to-r from-white to-[#d8dde5]">
                    <span className="h-px w-2 bg-[#8a909b]" />
                    <span className="h-px w-2 bg-[#8a909b]" />
                    <span className="h-px w-2 bg-[#8a909b]" />
                    <span className="h-px w-2 bg-[#8a909b]" />
                </span>
                <button type="button" aria-label="Scroll down" className="mb-1.5 mt-auto"><Icon w={9} h={5}><path d="M0 0h9L4.500 5z" fill="#444" /></Icon></button>
            </div>
            <span className="w-1 border-l border-[#777c86] bg-[#eceef2]" />
        </div>
    );
}

function TabEdge({ id, left, right }: { id: string; left: string; right: string }) {
    return (
        <svg width="12" height="15" viewBox="0 0 12 15" aria-hidden="true">
            <defs>
                {[left, right].map((tone, i) => (
                    <linearGradient key={i} id={`${id}-${i}`} x1="0" y1="0" x2="0" y2="1">
                        <stop offset="0" stopColor={toneFill[tone][0]} />
                        <stop offset="1" stopColor={toneFill[tone][1]} />
                    </linearGradient>
                ))}
            </defs>
            <path d="M0 0h12L1 15H0z" fill={`url(#${id}-0)`} />
            <path d="M12 0v15H1z" fill={`url(#${id}-1)`} />
            <path d="M11 0L1 14" stroke="#8a909b" strokeWidth=".8" />
            <path d="M12 0L2 14" stroke="#fff" strokeWidth="1.600" />
            <path d="M0 10l3 5H0z" fill="#dce0e6" stroke="#8a909b" strokeWidth=".6" />
        </svg>
    );
}

function SheetTabs() {
    return (
        <div className="flex h-[17px] shrink-0 border-b border-t border-[#9a9fa8] bg-[#dce0e6]">
            <div className="flex w-16 shrink-0 items-center justify-around border-r border-[#9a9fa8] px-0.5">
                <button type="button" aria-label="First sheet"><Icon w={7} h={7}><path d="M.5 0v7" stroke="#444" /><path d="M6 0v7L2 3.500z" fill="#444" /></Icon></button>
                <button type="button" aria-label="Previous sheet"><Icon w={5} h={7}><path d="M4 0v7L0 3.500z" fill="#444" /></Icon></button>
                <button type="button" aria-label="Next sheet"><Icon w={5} h={7}><path d="M0 0v7l4-3.500z" fill="#444" /></Icon></button>
                <button type="button" aria-label="Last sheet"><Icon w={7} h={7}><path d="M6.500 0v7" stroke="#444" /><path d="M1 0v7l4-3.500z" fill="#444" /></Icon></button>
            </div>
            <div className="flex w-[863px] min-w-0 overflow-hidden font-['DejaVu_Sans_Condensed','DejaVu_Sans',sans-serif] text-xs leading-[15px]">
                {sheetTabs.map((tab, i) => {
                    const next = sheetTabs[i + 1];
                    return (
                        <div key={tab.name} className="flex shrink-0">
                            <button type="button" className={`flex justify-center whitespace-nowrap ${tab.width} ${toneClass[tab.tone]}`}>{tab.name}</button>
                            {next && <TabEdge id={`edge${i}`} left={tab.tone} right={next.tone} />}
                        </div>
                    );
                })}
            </div>
            <div className="flex flex-1 items-center">
                <span className="flex h-full w-[7px] items-center justify-center border border-[#777c86] bg-white"><span className="h-2 w-px bg-[#777c86]" /></span>
                <button type="button" aria-label="Scroll left" className="px-1"><Icon w={5} h={9}><path d="M5 0v9L0 4.500z" fill="#444" /></Icon></button>
                <span className="ml-auto mr-[66px] flex h-full w-[251px] items-center justify-center gap-px rounded-sm border border-[#8a909b] bg-gradient-to-b from-white to-[#d8dde5]">
                    <span className="h-1.5 w-px bg-[#8a909b]" />
                    <span className="h-1.5 w-px bg-[#8a909b]" />
                    <span className="h-1.5 w-px bg-[#8a909b]" />
                    <span className="h-1.5 w-px bg-[#8a909b]" />
                </span>
                <button type="button" aria-label="Scroll right" className="pr-1.5"><Icon w={5} h={9}><path d="M0 0v9l5-4.500z" fill="#444" /></Icon></button>
                <span className="mr-[21px] flex h-full w-[7px] items-center justify-center border border-[#777c86] bg-white"><span className="h-2 w-px bg-[#777c86]" /></span>
            </div>
        </div>
    );
}

function StatusBar() {
    return (
        <footer className="flex h-[22px] shrink-0 items-center border-b border-[#4b4f55] bg-gradient-to-b from-[#eceef1] to-[#b9bdc3] text-[#3b3f47]">
            <span className="w-12 pl-2">Ready</span>
            <span className="h-[18px] w-px bg-[#8a909b]" />
            <div className="ml-auto flex items-center">
                <span className="mr-1 h-[18px] w-px bg-[#8a909b]" />
                <button type="button" aria-label="Normal view" className="flex h-[18px] w-[19px] items-center justify-center rounded-[3px] border border-[#c29030] bg-[#ffdc73]">
                    <Icon w={13} h={11}><path d="M.5.5h12v10H.5zM4.500 0v11M8.500 0v11M0 3.500h13M0 7.500h13" fill="#fff" stroke="#555" /></Icon>
                </button>
                <button type="button" aria-label="Page layout view" className="ml-[3px]">
                    <Icon w={14} h={12}><path d="M.5.5h13v11H.5z" fill="#a8abb0" stroke="#555" /><path d="M3.500 2.500h7v7h-7zM5 4.500h4M5 6.500h4" fill="#fff" stroke="#555" /></Icon>
                </button>
                <button type="button" aria-label="Page break view" className="ml-[5px]">
                    <Icon w={14} h={12}><path d="M.5.5h13v11H.5z" fill="#a8abb0" stroke="#555" /><path d="M1 1h3v6H1zM6 1h3v6H6z" fill="#fff" /></Icon>
                </button>
                <span className="ml-2.5 w-[37px]">100%</span>
                <button type="button" aria-label="Zoom out"><Icon><circle cx="8" cy="8" r="7" fill="#f2f3f5" stroke="#666b74" /><path d="M4 8h8" stroke="#444" strokeWidth="2" /></Icon></button>
                <input
                    type="range"
                    aria-label="Zoom"
                    defaultValue={50}
                    className="h-px w-[100px] appearance-none bg-[#7c818b] [&::-webkit-slider-thumb]:h-3 [&::-webkit-slider-thumb]:w-[9px] [&::-webkit-slider-thumb]:appearance-none [&::-webkit-slider-thumb]:rounded-b-[4px] [&::-webkit-slider-thumb]:border [&::-webkit-slider-thumb]:border-[#666b74] [&::-webkit-slider-thumb]:bg-[#f2f3f5]"
                />
                <button type="button" aria-label="Zoom in" className="mr-1"><Icon><circle cx="8" cy="8" r="7" fill="#f2f3f5" stroke="#666b74" /><path d="M4 8h8M8 4v8" stroke="#444" strokeWidth="2" /></Icon></button>
            </div>
        </footer>
    );
}

const TaskButton = ({ label, children, className = '' }: { label: string; children: ReactNode; className?: string }) => (
    <button type="button" aria-label={label} className={`flex h-[38px] w-[60px] items-center justify-center rounded-[3px] border border-[#5a6f8c] bg-gradient-to-br from-[#dbe6f2] to-[#a9c1dd] shadow-[inset_0_0_0_1px_#e6eef7] ${className}`}>
        {children}
    </button>
);

function Taskbar() {
    return (
        <div className="flex h-[39px] shrink-0 items-center border-t border-[#d2e0ee] bg-[linear-gradient(to_right,#8093ab_0,#8093ab_50px,#a6c0dc_90px,#a6c0dc_calc(100%_-_230px),#7f93ab_calc(100%_-_195px),#7f93ab_100%)]">
            <button type="button" aria-label="Start" className="ml-2">
                <Icon w={38} h={38}>
                    <defs>
                        <radialGradient id="orb" cx=".5" cy=".95" r=".9">
                            <stop offset="0" stopColor="#3fd6f5" />
                            <stop offset=".45" stopColor="#1b6fa8" />
                            <stop offset="1" stopColor="#6b8aa6" />
                        </radialGradient>
                    </defs>
                    <circle cx="19" cy="19" r="17.500" fill="url(#orb)" stroke="#22405e" strokeWidth="1.500" />
                    <path d="M3 15a16.500 16.500 0 0132 0c-8 4-22 5-32 0z" fill="#fff" opacity=".3" />
                    <path d="M10 9.500c3-1.700 5.500-1.500 8.500 0L16.500 18c-3-1.500-5.500-1.500-8.500 0z" fill="#ee5a28" />
                    <path d="M20 10c3 1.500 6.500 1.500 10-.3L27.700 18c-3.500 1.500-6.500 1.500-9.500.2z" fill="#8cc63f" />
                    <path d="M7.600 19.500c3-1.500 5.700-1.300 8.500 0L14 28c-2.800-1.500-5.500-1.500-8.700 0z" fill="#3ba7e6" />
                    <path d="M17.800 20c3 1.500 6 1.500 9.500.1L25 28c-3.500 1.500-6.500 1.500-9.300.2z" fill="#ffc928" />
                </Icon>
            </button>
            <button type="button" aria-label="Internet Explorer" className="ml-[27px]">
                <Icon w={34} h={32}>
                    <path d="M26 20C24.500 24 21.500 26 17.500 26c-5.500 0-9-4-9-9.500S12 7 17.500 7s9.500 4 9.200 9.500H9.500" stroke="#3f9fdc" strokeWidth="5" />
                    <path d="M12 15.500h13" stroke="#9fdcf8" strokeWidth="1.500" />
                    <path d="M7 29C0 31 2 19 11 11S31-1 29.500 5c0 1.500-.5 3-1.200 4.500" stroke="#f5c822" strokeWidth="2.800" />
                </Icon>
            </button>
            <button type="button" aria-label="Media Player" className="ml-[28px]">
                <Icon w={28} h={28}>
                    <path d="M9 3h17v22H9z" fill="#86b4d2" stroke="#5c92b5" />
                    <path d="M5 3h17v22H5z" fill="#9fc7df" stroke="#5c92b5" />
                    <path d="M1 3h17v22H1z" fill="#b9dbea" stroke="#5c92b5" />
                    <circle cx="11" cy="14" r="8.500" fill="#f0762b" stroke="#d05c14" />
                    <path d="M8 9v10l8-5z" fill="#fff" />
                </Icon>
            </button>
            <div className="ml-5 flex gap-0.5">
                <TaskButton label="File Explorer">
                    <Icon w={34} h={32}>
                        <path d="M2 5l1-2h7l1 2h8l1 1h12v22H2z" fill="#e9cf7b" stroke="#b99845" />
                        <path d="M4 7h12v3H4zM13 8h12v3H13zM20 10h12v3H20z" fill="#fff" stroke="#ccb36a" strokeWidth=".6" />
                        <path d="M5 4h3v2H5z" fill="#24a336" /><path d="M14 6h3v2h-3z" fill="#d33a2c" /><path d="M21 8h3v2h-3z" fill="#2f7ed0" />
                        <path d="M2 11h11l2 2h17v15H2z" fill="#f6e5a2" stroke="#c9ab58" />
                        <path d="M7 30v-8c0-1.500 1-2.500 2.500-2.500h16c1.500 0 2.500 1 2.500 2.500v8h-5v-5H12v5z" fill="#8fd0ec" stroke="#4f9dc2" />
                    </Icon>
                </TaskButton>
                <TaskButton label="Zalo">
                    <Icon w={32} h={32}>
                        <path d="M5 29C-2 21 0 6 9 2l14 27c-6 3-13 4-18 0z" fill="#0a68ff" />
                        <rect x="3" y="1" width="29" height="28" rx="12" fill="#fff" />
                        <text x="18" y="19" textAnchor="middle" fontSize="11" fontWeight="600" fontFamily="Inter, sans-serif" fill="#1668f0">Zalo</text>
                    </Icon>
                </TaskButton>
                <TaskButton label="Adobe Reader">
                    <Icon w={28} h={28}>
                        <rect x="0" y="0" width="28" height="28" rx="5" fill="#b30b00" />
                        <path d="M7 22c-2-1 2-4 7-5s8 0 8 1.500-4 1-7-2.500-3.500-8-2-9 2 3 .5 7S8.500 22.500 7 22z" stroke="#fff" strokeWidth="1.600" />
                    </Icon>
                </TaskButton>
                <div className="flex">
                    <TaskButton label="Microsoft Excel" className="w-[53px]! from-white! to-[#cfdeed]!">
                        <Icon w={32} h={32}>
                            <path d="M4 2h24v25H4z" fill="#f4faf2" stroke="#2f8a3c" strokeWidth="2" />
                            <path d="M2 5c8 0 16-1 20 0v17c-6 4-13 6-20 6z" fill="#e3f2de" />
                            <path d="M4 6h5.500l4 6 3.500-6h5l-6 9 5 7-4 3L13 19l-4.500 5H3.500L11 15z" fill="#1f7f31" />
                            <path d="M16 18l14 3-3 10-12-4z" fill="#fff" stroke="#a5b3a4" />
                            <path d="M18 21l10 2.500M17 24l10 2.500" stroke="#7fb27e" />
                        </Icon>
                    </TaskButton>
                    <span className="h-[38px] w-1 rounded-r-[3px] border-y border-r border-[#5a6f8c] bg-[#d5e1ee]" />
                    <span className="h-[38px] w-[3px] rounded-r-[3px] border-y border-r border-[#8297b0] bg-[#bccfe3]" />
                </div>
                <TaskButton label="Google Chrome">
                    <Icon w={30} h={30}>
                        <circle cx="15" cy="15" r="15" fill="#ffcd40" />
                        <path d="M15 15L2 7.500A15 15 0 0128 7.500H15z" fill="#db4437" />
                        <path d="M2 7.500A15 15 0 0015 30l6-11.500-6-3z" fill="#0f9d58" />
                        <circle cx="15" cy="15" r="7" fill="#f1f1f1" />
                        <circle cx="15" cy="15" r="5.500" fill="#4285f4" />
                    </Icon>
                </TaskButton>
            </div>
            <div className="ml-auto flex h-full items-center">
                <button type="button" aria-label="Show hidden icons"><Icon w={9} h={5}><path d="M0 5h9L4.500 0z" fill="#fff" /></Icon></button>
                <button type="button" aria-label="Unikey" className="ml-3">
                    <Icon>
                        <rect x=".5" y=".5" width="15" height="15" fill="#f5dcdc" stroke="#c98f8f" />
                        <text x="8" y="13" textAnchor="middle" fontSize="14" fontWeight="bold" fontFamily="Liberation Sans, sans-serif" fill="#c21f1f">V</text>
                    </Icon>
                </button>
                <button type="button" aria-label="Action center" className="ml-2">
                    <Icon>
                        <path d="M2 1v14" stroke="#fff" strokeWidth="2" />
                        <path d="M3 2c3-1 4 1 8 0v7c-4 1-5-1-8 0z" fill="#fff" />
                        <circle cx="11.500" cy="11" r="4.500" fill="#d4301f" />
                        <path d="M9.800 9.300l3.400 3.400M13.200 9.300l-3.400 3.400" stroke="#fff" strokeWidth="1.500" />
                    </Icon>
                </button>
                <button type="button" aria-label="Network" className="ml-2">
                    <Icon>
                        <path d="M5.500 4.500h10v8h-10z" fill="#5f738c" stroke="#fff" strokeWidth="1.500" />
                        <path d="M7 15h7M2 1v4h4V1M4 5v9h3" stroke="#fff" strokeWidth="1.300" />
                    </Icon>
                </button>
                <div className="ml-3.5 w-[66px] text-center text-[11px] leading-[17px] text-white">
                    <div>4:06 CH</div>
                    <div>28/12/2021</div>
                </div>
                <button type="button" aria-label="Show desktop" className="ml-2 h-full w-[14px] border border-[#43556c] bg-gradient-to-br from-[#a9b8ca] to-[#6f839c]" />
            </div>
        </div>
    );
}

export default function App() {
    return (
        <div className="flex h-screen w-full flex-col overflow-hidden bg-gradient-to-b from-[#eaecf0] to-[#dfe3e8] to-10% font-['Open_Sans',sans-serif] text-[11px]">
            <TitleBar />
            <RibbonTabs />
            <Ribbon />
            <div className="h-[3px] shrink-0 bg-[#cfd3d9]" />
            <FormulaBar />
            <div className="h-1 shrink-0 border-b border-[#7d828b] bg-[#f2f4f6]" />
            <main className="flex min-h-0 flex-1">
                <div className="min-w-0 flex-1 overflow-hidden bg-white">
                    <Sheet />
                </div>
                <VerticalScroll />
            </main>
            <SheetTabs />
            <StatusBar />
            <Taskbar />
        </div>
    );
}
